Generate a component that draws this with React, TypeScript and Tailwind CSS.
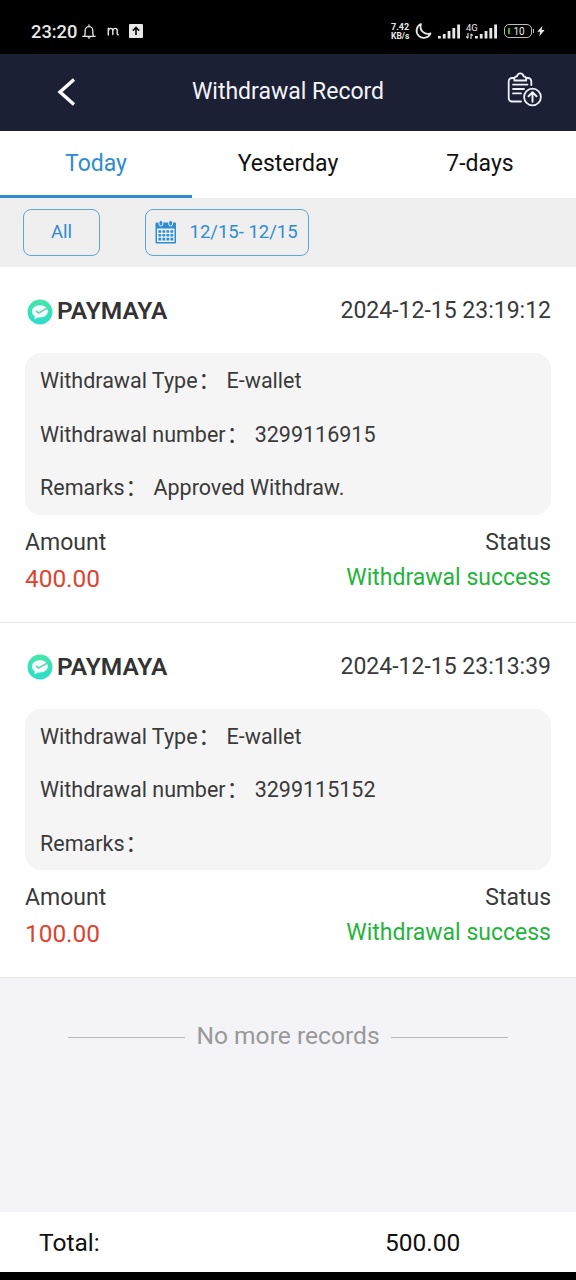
import { ReactNode } from "react";

interface WithdrawalRecord {
     time: string;
     number: string;
     remarks: string;
     amount: string;
}

const records: WithdrawalRecord[] = [
     { time: "2024-12-15 23:19:12", number: "3299116915", remarks: "Approved Withdraw.", amount: "400.00" },
     { time: "2024-12-15 23:13:39", number: "3299115152", remarks: "", amount: "100.00" },
];

const tabs = ["Today", "Yesterday", "7-days"];

const SignalBars = () => (
     <svg width="24" height="16" viewBox="0 0 24 16" fill="#e8e8e8">
          <rect x="1" y="13" width="2.8" height="2.5" />
          <rect x="5.8" y="11" width="2.8" height="4.5" />
          <rect x="10.6" y="8" width="2.8" height="7.5" />
          <rect x="15.4" y="5" width="2.8" height="10.5" />
          <rect x="20.2" y="1.5" width="2.8" height="14" />
     </svg>
);

const StatusBar = () => (
     <div className="flex h-[54px] items-start justify-between bg-black pt-[20px] pr-[31px] pl-[31px] text-[#e8e8e8]">
          <div className="flex h-[23px] items-center">
               <span className="w-[51px] text-[18.3px] leading-[24px] font-medium whitespace-nowrap">23:20</span>
               <svg width="14" height="16" viewBox="0 0 14 16" fill="none" stroke="#e8e8e8" strokeWidth="1.3">
                    <path d="M.8 12.3h12.4M2.5 12c.7-1 .7-2 .7-5.6a3.8 3.8 0 0 1 7.6 0c0 3.6 0 4.6.7 5.6M7 2V1" strokeLinecap="round" />
                    <path d="M5.3 13.3h3.4L7 15z" fill="#e8e8e8" stroke="none" />
               </svg>
               <svg className="-mt-px ml-[11px]" width="12" height="9" viewBox="0 0 12 9" fill="none" stroke="#e8e8e8" strokeWidth="1.4" strokeLinecap="round">
                    <path d="M1.3 8V1.2M1.3 4C1.8.6 5.8.6 5.8 3.5V7.6M5.8 4C6.3.6 10.2.6 10.2 3.5V6.6q0 1.2 1 1.2" />
               </svg>
               <svg className="-mt-px ml-[10px]" width="14" height="14" viewBox="0 0 14 14">
                    <rect width="14" height="14" rx="1" fill="#e8e8e8" />
                    <path d="M7 11V4M3.9 6.6 7 3.5l3.1 3.1" fill="none" stroke="#111" strokeWidth="1.7" />
               </svg>
          </div>
          <div className="flex h-[23px] items-center">
               <div className="w-[24px] pl-px text-[9px] leading-[9px] font-bold whitespace-nowrap">
                    <p>7.42</p>
                    <p className="text-[8.5px]">KB/s</p>
               </div>
               <svg className="-mt-[2px]" width="18" height="18" viewBox="0 0 18 18" fill="none" stroke="#e8e8e8" strokeWidth="1.8" strokeLinejoin="round">
                    <path d="M7 2A7.2 7.2 0 1 0 16.5 11.3C11 13.5 4.8 8.500 7 2Z" />
               </svg>
               <div className="-mt-px ml-[5px]"><SignalBars /></div>
               <div className="relative -mt-px ml-[13px]">
                    <SignalBars />
                    <span className="absolute top-0 -left-[8px] text-[9.5px] leading-[9px]">4G</span>
                    <svg className="absolute top-[10px] -left-[8px]" width="7" height="6" viewBox="0 0 7 6" fill="none" stroke="#e8e8e8" strokeWidth="1.1">
                         <path d="M2 0v5M.3 3.4 2 5.3M5 6V.8M5 .8l1.7 1.8" />
                    </svg>
               </div>
               <div className="relative -mt-px ml-[6px] flex h-[14px] w-[28px] items-center justify-center rounded-[5px] border-[1.5px] border-[#bcbcbc] pt-px pl-[2px] text-[10px] leading-none">
                    <span className="absolute top-[3px] left-[3px] h-[6px] w-[2px] bg-[#4fa52e]" />
                    10
               </div>
               <span className="-mt-px ml-px h-[4px] w-px bg-[#bcbcbc]" />
               <svg className="-mt-px ml-[3px]" width="8" height="12" viewBox="0 0 9 12" fill="#e8e8e8">
                    <path d="M6.2 0 .3 6.8h3.2L2.6 12l6-7H5.2z" />
               </svg>
          </div>
     </div>
);

const ClipboardIcon = () => (
     <svg className="-mt-[5px]" width="36" height="36" viewBox="0 0 36 36" fill="none" stroke="#eef0f8" strokeWidth="1.8" strokeLinecap="round" strokeLinejoin="round">
          <path d="M6.500 6H5a3.300 3.300 0 0 0-3.300 3.300v16.900A3.300 3.300 0 0 0 5 29.500h9" />
          <path d="M19.500 6H21a3.300 3.300 0 0 1 3.300 3.300V13" />
          <path d="M7.300 8.500V6.800c0-1.500 1-2.300 2.700-2.500C10.800.5 15.800.5 16.600 4.300c1.700.2 2.600 1 2.600 2.500v1.700z" />
          <path d="M6 12.600h14.500M6 17h11M6 21.400h8" />
          <circle cx="25.500" cy="25" r="8.400" />
          <path d="M25.500 29.800v-9M21.500 24.300l4-4 4 4" strokeWidth="2" />
     </svg>
);

const CalendarIcon = () => (
     <svg className="-mt-px" width="22" height="24" viewBox="0 0 22 24">
          <path d="M1.5 2.5h18.5a1 1 0 0 1 1 1V22.5a1 1 0 0 1-1 1H1.5a1 1 0 0 1-1-1V3.5a1 1 0 0 1 1-1z" fill="#2f8ccf" />
          <path d="M2 8.5h17.5V22H2z" fill="#eef4f8" />
          <g fill="#2f8ccf" stroke="#efefef" strokeWidth="1">
               <rect x="4" y=".5" width="3.8" height="5.5" rx="1.9" />
               <rect x="13.7" y=".5" width="3.8" height="5.5" rx="1.9" />
          </g>
          <path d="M3.4 11.5h15M3.4 15.3h15M3.4 19.1h15" stroke="#2f8ccf" strokeWidth="2.6" strokeDasharray="2.8 1.2" />
     </svg>
);

const WalletLogo = () => (
     <svg width="26" height="26" viewBox="0 0 26 26">
          <defs>
               <linearGradient id="walletFill" x1="0" y1="0" x2="0" y2="1">
                    <stop offset="0" stopColor="#46e6a8" />
                    <stop offset="1" stopColor="#2bdccb" />
               </linearGradient>
          </defs>
          <circle cx="13" cy="13" r="12.5" fill="url(#walletFill)" />
          <path d="M13 6.300c-4.600 0-8 2.600-8 6 0 2.200 1 3.800 2.600 5V20.300l3.600-1.900c5.500.8 9.600-2 9.600-6.100C20.800 8.900 17.600 6.300 13 6.300z" fill="#f4fffc" />
          <path d="M9 12l2.600 2 8.400-4.800" fill="none" stroke="#6fd3b5" strokeWidth="1.700" />
     </svg>
);

const Field = ({ label, children }: { label: string; children?: ReactNode }) => (
     <p className="h-[53.5px] text-[21.5px] leading-[55.5px] whitespace-pre">
          {label}<span className="ml-px">：</span><span className="ml-[6.5px]">{children}</span>
     </p>
);

const RecordCard = ({ record }: { record: WithdrawalRecord }) => (
     <div className="h-[355.5px] border-b border-[#e6e6e6] bg-white px-[25px] text-[#3a3a3a]">
          <div className="flex h-[86px] items-center justify-between pt-[3px]">
               <div className="flex items-center gap-[4px] pl-[2px]">
                    <WalletLogo />
                    <span className="text-[24.5px] font-semibold text-[#333]">PAYMAYA</span>
               </div>
               <span className="text-[23px]">{record.time}</span>
          </div>
          <div className="h-[161.5px] rounded-[16px] bg-[#f5f5f5] pl-[15px]">
               <Field label="Withdrawal Type">E-wallet</Field>
               <Field label="Withdrawal number">{record.number}</Field>
               <Field label="Remarks">{record.remarks}</Field>
          </div>
          <div className="flex justify-between pt-[10px] text-[23px] leading-[36px]">
               <div>
                    <p>Amount</p>
                    <p className="text-[24.4px] text-[#dc4430]">{record.amount}</p>
               </div>
               <div className="text-right">
                    <p>Status</p>
                    <p className="leading-[33px] text-[#24b43c]">Withdrawal success</p>
               </div>
          </div>
     </div>
);

const App = () => {
     return (
          <div className="flex h-[1280px] w-[576px] flex-col overflow-hidden bg-[#f3f3f8] font-['Roboto','Noto_Sans_CJK_SC',sans-serif]">
               <StatusBar />
               <div className="flex h-[77px] items-center justify-between bg-[#1b2034] pr-[33px] pl-[56px]">
                    <svg className="-mt-[2px]" width="20" height="30" viewBox="0 0 20 30" fill="none" stroke="#fff" strokeWidth="3.4">
                         <path d="M18 2.5 4 15l14 12.5" />
                    </svg>
                    <h1 className="mr-[7px] text-[23px] text-[#f3f4f8]">Withdrawal Record</h1>
                    <ClipboardIcon />
               </div>
               <div className="flex h-[67px] bg-white">
                    {
                         tabs.map((tab, index) => (
                              <div
                                   key={tab}
                                   className={`flex-1 border-b-[3px] text-center text-[23px] leading-[66px] ${index === 0 ? "border-[#2f8ccf] text-[#2f8ccf]" : "border-white text-[#111]"}`}
                              >
                                   {tab}
                              </div>
                         ))
                    }
               </div>
               <div className="flex h-[69px] items-center bg-[#efefef] px-[23px] text-[#2f8ccf]">
                    <button className="h-[47px] w-[77px] rounded-[8px] border border-[#5fa8d8] text-[18.5px]">All</button>
                    <button className="ml-[45px] flex h-[47px] w-[164px] items-center rounded-[8px] border border-[#5fa8d8] pl-[9px] text-[18.5px]">
                         <CalendarIcon />
                         <span className="ml-[12.5px] whitespace-nowrap">12/15- 12/15</span>
                    </button>
               </div>
               {
                    records.map((record) => <RecordCard key={record.number} record={record} />)
               }
               <div className="flex items-center justify-center gap-[11px] pt-[42px] text-[24.6px] leading-[32px] text-[#999]">
                    <span className="mt-[2px] h-px w-[117px] bg-[#bbb]" />
                    No more records
                    <span className="mt-[2px] h-px w-[117px] bg-[#bbb]" />
               </div>
               <div className="mt-auto flex h-[68px] shrink-0 border-b-8 border-black bg-white pl-[39px] text-[24.5px] leading-[62px] text-[#111]">
                    <span className="w-[346px]">Total:</span>
                    <span>500.00</span>
               </div>
          </div>
     );
};

export default App;
